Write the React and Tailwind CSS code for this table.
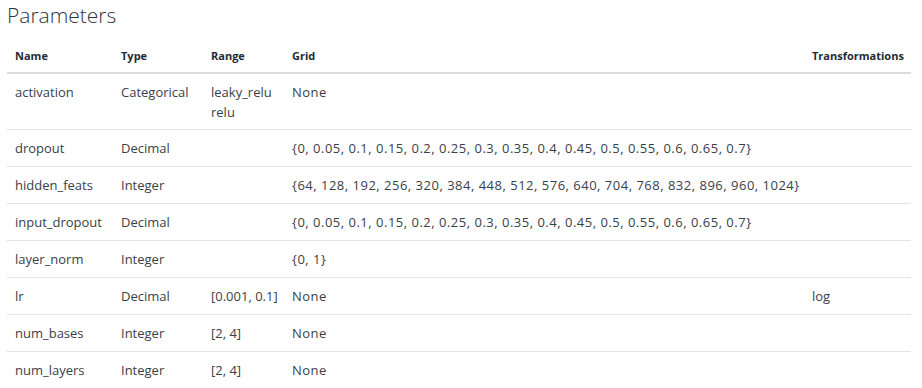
const rows = [
  { name: "activation", type: "Categorical", range: ["leaky_relu", "relu"], grid: "None", tf: "" },
  { name: "dropout", type: "Decimal", range: [], grid: "{0, 0.05, 0.1, 0.15, 0.2, 0.25, 0.3, 0.35, 0.4, 0.45, 0.5, 0.55, 0.6, 0.65, 0.7}", tf: "" },
  { name: "hidden_feats", type: "Integer", range: [], grid: "{64, 128, 192, 256, 320, 384, 448, 512, 576, 640, 704, 768, 832, 896, 960, 1024}", tf: "" },
  { name: "input_dropout", type: "Decimal", range: [], grid: "{0, 0.05, 0.1, 0.15, 0.2, 0.25, 0.3, 0.35, 0.4, 0.45, 0.5, 0.55, 0.6, 0.65, 0.7}", tf: "" },
  { name: "layer_norm", type: "Integer", range: [], grid: "{0, 1}", tf: "" },
  { name: "lr", type: "Decimal", range: ["[0.001, 0.1]"], grid: "None", tf: "log" },
  { name: "num_bases", type: "Integer", range: ["[2, 4]"], grid: "None", tf: "" },
  { name: "num_layers", type: "Integer", range: ["[2, 4]"], grid: "None", tf: "" },
];

export default function App() {
  return (
    <div className="w-[922px] h-[388px] bg-white overflow-hidden px-[7px] text-[#3a4148]" style={{ fontFamily: "'Open Sans', Lato, sans-serif" }}>
      <h1 className="pt-[1px] text-[21px] leading-[28px] font-light text-[#2e3338]">Parameters</h1>
      <table className="mt-[12px] w-[904px] table-fixed border-collapse text-[13px]">
        <colgroup>
          <col className="w-[106px]" />
          <col className="w-[90px]" />
          <col className="w-[81px]" />
          <col className="w-[520px]" />
          <col className="w-[107px]" />
        </colgroup>
        <thead>
          <tr className="border-b-2 border-[#dcdcdc] text-left text-[11px] font-bold text-[#1e2a33]">
            <th className="px-2 pt-[7px] pb-[8px] leading-[16px]">Name</th>
            <th className="px-2 pt-[7px] pb-[8px] leading-[16px]">Type</th>
            <th className="px-2 pt-[7px] pb-[8px] leading-[16px]">Range</th>
            <th className="px-2 pt-[7px] pb-[8px] leading-[16px]">Grid</th>
            <th className="px-2 pt-[7px] pb-[8px] leading-[16px]">Transformations</th>
          </tr>
        </thead>
        <tbody>
          {rows.map((r, i) => {
            const pad = i === 0 ? "pt-[8px] pb-[7px]" : "py-[8px]";
            return (
              <tr key={r.name} className="border-b border-[#e3e3e3] last:border-b-0 align-top leading-[20px]">
                <td className={`px-2 ${pad} whitespace-nowrap`}>{r.name}</td>
                <td className={`px-2 ${pad} whitespace-nowrap`}>{r.type}</td>
                <td className={`px-2 ${pad} whitespace-nowrap`}>
                  {r.range.map((x) => (
                    <div key={x}>{x}</div>
                  ))}
                </td>
                <td className={`px-2 ${pad} whitespace-nowrap tracking-[0.5px]`}>{r.grid}</td>
                <td className={`px-2 ${pad} whitespace-nowrap`}>{r.tf}</td>
              </tr>
            );
          })}
        </tbody>
      </table>
    </div>
  );
}
